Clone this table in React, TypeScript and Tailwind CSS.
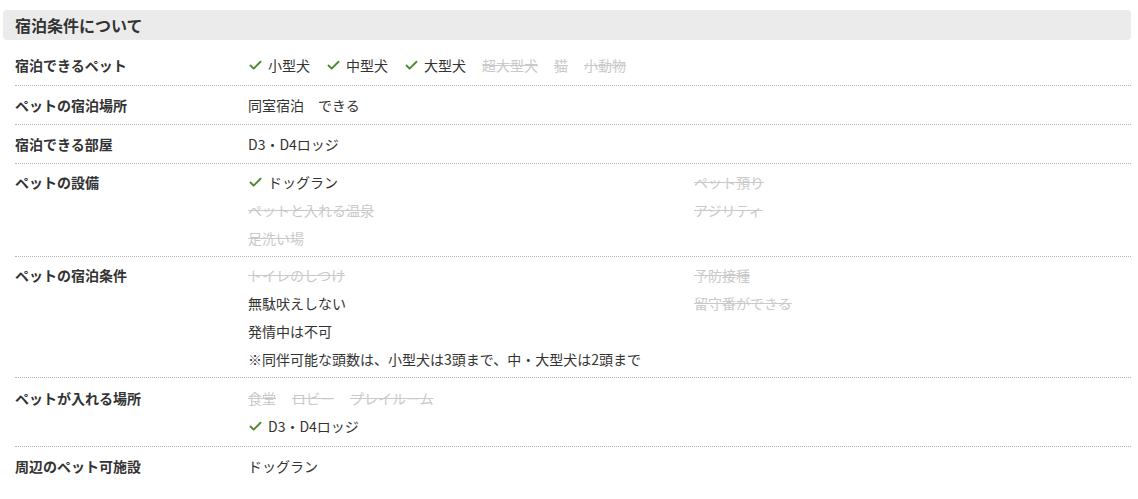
import { Check } from 'lucide-react';

type Item = { label: string; ok: boolean; plain?: boolean };

function Tick({ item }: { item: Item }) {
    if (item.plain) return <span>{item.label}</span>;
    if (!item.ok) return <span className="text-[#c9c9c9] line-through decoration-[#c9c9c9]">{item.label}</span>;
    return (
        <span className="flex items-center">
            <Check className="w-[15px] h-[15px] mr-[5px] text-[#4b8a2c]" strokeWidth={3} />
            {item.label}
        </span>
    );
}

function Line({ children }: { children: React.ReactNode }) {
    return <div className="h-[28px] flex items-center">{children}</div>;
}

function Row({ label, pad = 'py-[5px]', children }: { label: string; pad?: string; children: React.ReactNode }) {
    return (
        <div className={`flex ml-3 ${pad} border-b border-dotted border-[#b5b5b5] last:border-b-0`}>
            <div className="w-[233px] shrink-0 font-bold h-[28px] flex items-center">{label}</div>
            <div className="flex-1">{children}</div>
        </div>
    );
}

function Inline({ items }: { items: Item[] }) {
    return (
        <div className="h-[28px] flex items-center gap-[16px]">
            {items.map((it) => (
                <Tick key={it.label} item={it} />
            ))}
        </div>
    );
}

function TwoCol({ left, right }: { left: Item[]; right: Item[] }) {
    return (
        <div className="grid grid-cols-[446px_1fr]">
            <div className="flex flex-col">
                {left.map((it) => (
                    <Line key={it.label}>
                        <Tick item={it} />
                    </Line>
                ))}
            </div>
            <div className="flex flex-col">
                {right.map((it) => (
                    <Line key={it.label}>
                        <Tick item={it} />
                    </Line>
                ))}
            </div>
        </div>
    );
}

export default function App() {
    return (
        <div
            className="bg-white text-[#333] text-[14px] pt-[10px] pr-[7px] pl-[3px]"
            style={{ fontFamily: '"Noto Sans CJK JP", "Noto Sans", sans-serif' }}
        >
            <div className="bg-[#ebebeb] rounded-[4px] h-[30px] flex items-center pl-3 mb-[6px]">
                <h2 className="text-[16px] font-bold">宿泊条件について</h2>
            </div>

            <Row label="宿泊できるペット" pad="pt-[5px] pb-[6px]">
                <Inline
                    items={[
                        { label: '小型犬', ok: true },
                        { label: '中型犬', ok: true },
                        { label: '大型犬', ok: true },
                        { label: '超大型犬', ok: false },
                        { label: '猫', ok: false },
                        { label: '小動物', ok: false },
                    ]}
                />
            </Row>
            <Row label="ペットの宿泊場所">
                <Line>同室宿泊　できる</Line>
            </Row>
            <Row label="宿泊できる部屋">
                <Line>D3・D4ロッジ</Line>
            </Row>
            <Row label="ペットの設備" pad="py-[4px]">
                <TwoCol
                    left={[
                        { label: 'ドッグラン', ok: true },
                        { label: 'ペットと入れる温泉', ok: false },
                        { label: '足洗い場', ok: false },
                    ]}
                    right={[
                        { label: 'ペット預り', ok: false },
                        { label: 'アジリティ', ok: false },
                    ]}
                />
            </Row>
            <Row label="ペットの宿泊条件" pad="py-[4px]">
                <TwoCol
                    left={[
                        { label: 'トイレのしつけ', ok: false },
                        { label: '無駄吠えしない', ok: true, plain: true },
                        { label: '発情中は不可', ok: true, plain: true },
                        { label: '※同伴可能な頭数は、小型犬は3頭まで、中・大型犬は2頭まで', ok: true, plain: true },
                    ]}
                    right={[
                        { label: '予防接種', ok: false },
                        { label: '留守番ができる', ok: false },
                    ]}
                />
            </Row>
            <Row label="ペットが入れる場所" pad="py-[6px]">
                <Inline
                    items={[
                        { label: '食堂', ok: false },
                        { label: 'ロビー', ok: false },
                        { label: 'プレイルーム', ok: false },
                    ]}
                />
                <Line>
                    <Tick item={{ label: 'D3・D4ロッジ', ok: true }} />
                </Line>
            </Row>
            <Row label="周辺のペット可施設">
                <Line>ドッグラン</Line>
            </Row>
        </div>
    );
}
